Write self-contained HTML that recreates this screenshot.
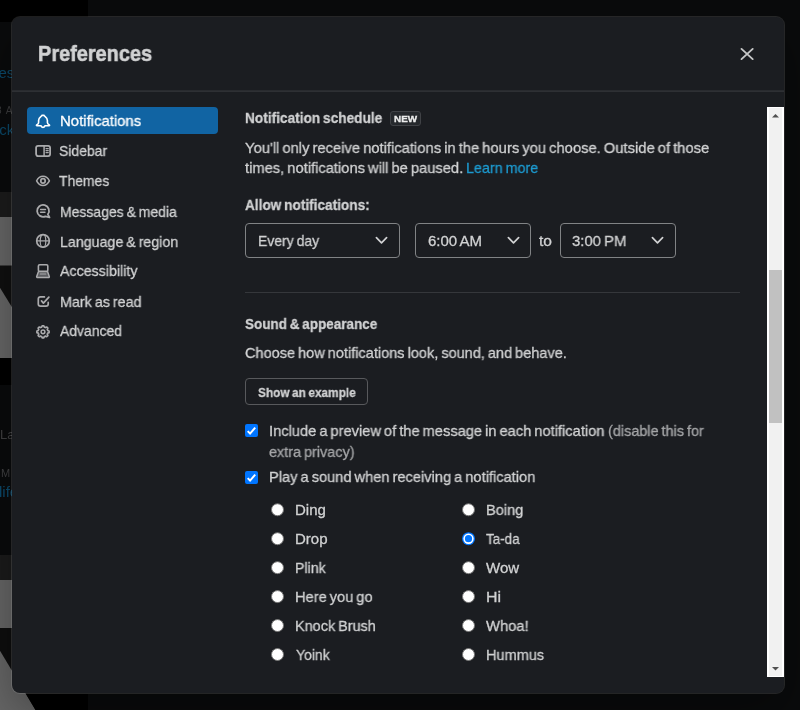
<!DOCTYPE html>
<html>
<head>
<meta charset="utf-8">
<title>Preferences</title>
<style>
*{box-sizing:border-box;margin:0;padding:0}
html,body{width:800px;height:710px;overflow:hidden;background:#0a0b0c;font-family:"Liberation Sans",sans-serif;}
body{position:relative;color:#d1d2d3;font-size:15px;line-height:22px}
.a{position:absolute}
#dlg{position:absolute;left:12px;top:17px;width:772px;height:676px;background:#1b1d21;border-radius:8px;box-shadow:0 0 0 1px rgba(232,232,232,.13),0 18px 48px rgba(0,0,0,.35)}
.t{position:absolute;white-space:nowrap;transform-origin:0 0;will-change:transform;-webkit-text-stroke:0.3px currentColor}
#title{-webkit-text-stroke:.6px currentColor}
.bgt{position:absolute;white-space:nowrap;left:0;will-change:transform}
.selbox{position:absolute;top:223px;height:35px;border:1px solid #818385;border-radius:4px}
.chev{position:absolute;top:236px;width:13px;height:9px}
.cb{position:absolute;left:245px;width:13px;height:13px;background:#0075ff;border-radius:2px}
.cb svg{position:absolute;left:0;top:0}
.rd{position:absolute;width:13px;height:13px;border-radius:50%;background:#fff;border:1px solid #767676}
.rd.on{border:2px solid #0075ff;background:#0075ff;box-shadow:inset 0 0 0 1.5px #fff}
.ic{position:absolute;left:34px;width:18px;height:18px;fill:none;stroke:#ababad;stroke-width:1.5;stroke-linecap:round;stroke-linejoin:round}
</style>
</head>
<body>
<!-- dimmed app background -->
<div class="a" style="left:0;top:0;width:88px;height:710px;background:#000"></div>
<div class="a" style="left:0;top:22px;width:88px;height:672px;background:#0a0b0c"></div>
<div class="a" style="left:0;top:192px;width:30px;height:25px;background:#1c1c1c"></div>
<div class="a" style="left:0;top:217px;width:30px;height:141px;background:#686868"></div>
<div class="a" style="left:0;top:358px;width:30px;height:27px;background:#010101"></div>
<div class="a" style="left:0;top:555px;width:30px;height:25px;background:#1b1b1b"></div>
<div class="a" style="left:0;top:580px;width:40px;height:130px;background:#676767"></div>
<svg class="a" style="left:0;top:0" width="60" height="710">
<polygon points="0,265.5 30,265.5 30,336.5 0,287.8" fill="#101010"/>
<polygon points="0,628 60,628 60,710 35.5,710 0,650.8" fill="#0e0e0e"/>
<polygon points="26,694 60,694 60,710 35.5,710" fill="#000"/>
</svg>
<div class="bgt" style="top:62px;left:-9px;font-size:15px;color:#0b4a6b">yes</div>
<div class="bgt" style="top:100px;left:-4px;font-size:10px;color:#3c3c3e;letter-spacing:1px">8 A</div>
<div class="bgt" style="top:119px;left:-9.5px;font-size:15px;color:#0b4a6b">ack</div>
<div class="bgt" style="top:424px;left:0px;font-size:13px;color:#414143">La</div>
<div class="bgt" style="top:461.5px;left:0.5px;font-size:11px;color:#414143">M</div>
<div class="bgt" style="top:481px;left:-1px;font-size:15px;color:#0c4c6e">life</div>

<div id="dlg"></div>
<div class="a" style="left:12px;top:90px;width:772px;height:1px;background:#292b2f"></div>
<div class="a" style="left:12px;top:91px;width:772px;height:1px;background:#2e3034"></div>

<!-- close X -->
<svg class="a" style="left:738px;top:45px" width="18" height="18" viewBox="0 0 18 18"><path d="M3.5 3.9 L14.7 14.1 M14.7 3.9 L3.5 14.1" stroke="#c6c7c8" stroke-width="1.9" stroke-linecap="round" fill="none"/></svg>

<!-- nav -->
<div class="a" style="left:27px;top:107px;width:191px;height:27px;border-radius:4px;background:#1164a3"></div>
<svg class="ic" style="top:112px" viewBox="0 0 18 18"><path d="M7.9 3.4 H10.1 C10.4 4.6 13.4 5.2 13.4 8.4 V10.4 C13.4 11.6 14.2 12.2 15.3 12.9 C15.8 13.3 15.6 13.7 15 13.7 H11 C10.8 14.9 10 15.4 9 15.4 C8 15.4 7.2 14.9 7 13.7 H3 C2.4 13.7 2.2 13.3 2.7 12.9 C3.8 12.2 4.6 11.6 4.6 10.4 V8.4 C4.6 5.2 7.6 4.6 7.9 3.4 Z" stroke="#fff" stroke-width="1.6"/></svg>
<svg class="ic" style="top:142px" viewBox="0 0 18 18"><rect x="2.1" y="3.8" width="14" height="10.3" rx="2" stroke-width="1.8"/><path d="M10.1 3.7 V14.3"/><path d="M12 6.6 H14.3 M12 8.6 H14.3 M12 10.6 H14.3" stroke-width="1.1"/></svg>
<svg class="ic" style="top:172px" viewBox="0 0 18 18"><path d="M2.6 8.9 C4.2 5.7 6.6 4.3 9 4.3 C11.4 4.3 13.8 5.7 15.4 8.9 C13.8 12.1 11.4 13.5 9 13.5 C6.6 13.5 4.2 12.1 2.6 8.9 Z"/><circle cx="9" cy="8.9" r="2.2" stroke-width="1.7"/></svg>
<svg class="ic" style="top:202px" viewBox="0 0 18 18"><path d="M13.9 12.3 A5.95 5.95 0 1 0 11.4 14.3 L15.5 15.4 Z" stroke-width="1.8"/><path d="M6.6 7.45 H11.5 M6.6 10.3 H11" stroke-width="1.4"/></svg>
<svg class="ic" style="top:232px" viewBox="0 0 18 18"><circle cx="9" cy="8.9" r="6.3" stroke-width="1.7"/><ellipse cx="9" cy="8.9" rx="2.8" ry="6.4" stroke-width="1.2"/><path d="M2.6 8.9 H15.4" stroke-width="1.3"/></svg>
<svg class="ic" style="top:262px" viewBox="0 0 18 18"><rect x="4.4" y="2.8" width="9.4" height="6.6" rx="1.2" stroke-width="1.6"/><path d="M4.4 9.8 L2.7 14.4 Q2.5 15.5 3.6 15.5 H14.4 Q15.5 15.5 15.3 14.4 L13.6 9.8" fill="rgba(171,171,173,.45)"/><path d="M6.2 12 H11.8" stroke-width="1.1"/></svg>
<svg class="ic" style="top:292px" viewBox="0 0 18 18"><path d="M10.4 4.9 H6.5 Q4.3 4.9 4.3 7.1 V11.9 Q4.3 14.1 6.5 14.1 H12 Q14.2 14.1 14.2 11.9 V10.4" stroke-width="1.7"/><path d="M7.5 8.9 L9.4 11.1 L14.9 5.2" stroke-width="1.7"/></svg>
<svg class="ic" style="top:322px" viewBox="0 0 18 18"><path d="M9.00 3.75 L9.40 3.76 L9.80 3.80 L10.07 4.46 L10.27 5.12 L10.58 5.21 L10.88 5.32 L11.17 5.46 L11.45 5.61 L12.06 5.28 L12.71 5.01 L13.02 5.26 L13.31 5.54 L13.59 5.83 L13.84 6.14 L13.57 6.79 L13.24 7.40 L13.39 7.68 L13.53 7.97 L13.64 8.27 L13.73 8.58 L14.39 8.78 L15.05 9.05 L15.09 9.45 L15.10 9.85 L15.09 10.25 L15.05 10.65 L14.39 10.92 L13.73 11.12 L13.64 11.43 L13.53 11.73 L13.39 12.02 L13.24 12.30 L13.57 12.91 L13.84 13.56 L13.59 13.87 L13.31 14.16 L13.02 14.44 L12.71 14.69 L12.06 14.42 L11.45 14.09 L11.17 14.24 L10.88 14.38 L10.58 14.49 L10.27 14.58 L10.07 15.24 L9.80 15.90 L9.40 15.94 L9.00 15.95 L8.60 15.94 L8.20 15.90 L7.93 15.24 L7.73 14.58 L7.42 14.49 L7.12 14.38 L6.83 14.24 L6.55 14.09 L5.94 14.42 L5.29 14.69 L4.98 14.44 L4.69 14.16 L4.41 13.87 L4.16 13.56 L4.43 12.91 L4.76 12.30 L4.61 12.02 L4.47 11.73 L4.36 11.43 L4.27 11.12 L3.61 10.92 L2.95 10.65 L2.91 10.25 L2.90 9.85 L2.91 9.45 L2.95 9.05 L3.61 8.78 L4.27 8.58 L4.36 8.27 L4.47 7.97 L4.61 7.68 L4.76 7.40 L4.43 6.79 L4.16 6.14 L4.41 5.83 L4.69 5.54 L4.98 5.26 L5.29 5.01 L5.94 5.28 L6.55 5.61 L6.83 5.46 L7.12 5.32 L7.42 5.21 L7.73 5.12 L7.93 4.46 L8.20 3.80 L8.60 3.76 Z" stroke-width="1.7"/><circle cx="9.0" cy="9.8" r="1.9" stroke-width="1.5"/></svg>

<!-- badge -->
<div class="a" style="left:390px;top:111px;width:31px;height:15px;border-radius:3px;background:#25282c;border:1px solid #404246"></div>

<!-- selects -->
<div class="selbox" style="left:245px;width:155px"></div>
<div class="selbox" style="left:415px;width:116px"></div>
<div class="selbox" style="left:560px;width:116px"></div>
<svg class="chev" style="left:375px" viewBox="0 0 13 9"><path d="M1.4 1.7 L6.5 6.8 L11.6 1.7" stroke="#d1d2d3" stroke-width="1.7" fill="none" stroke-linecap="round" stroke-linejoin="round"/></svg>
<svg class="chev" style="left:506.5px" viewBox="0 0 13 9"><path d="M1.4 1.7 L6.5 6.8 L11.6 1.7" stroke="#d1d2d3" stroke-width="1.7" fill="none" stroke-linecap="round" stroke-linejoin="round"/></svg>
<svg class="chev" style="left:651px" viewBox="0 0 13 9"><path d="M1.4 1.7 L6.5 6.8 L11.6 1.7" stroke="#d1d2d3" stroke-width="1.7" fill="none" stroke-linecap="round" stroke-linejoin="round"/></svg>

<!-- hr -->
<div class="a" style="left:245px;top:292px;width:495px;height:1px;background:#35373b"></div>

<!-- button -->
<div class="a" style="left:245px;top:378px;width:123px;height:27px;border:1px solid #58595c;border-radius:4px"></div>

<!-- checkboxes -->
<div class="cb" style="top:424px"><svg width="13" height="13" viewBox="0 0 13 13"><path d="M2.7 7.1 L5.1 9.6 L10.2 3.7" stroke="#fff" stroke-width="2" fill="none"/></svg></div>
<div class="cb" style="top:471px"><svg width="13" height="13" viewBox="0 0 13 13"><path d="M2.7 7.1 L5.1 9.6 L10.2 3.7" stroke="#fff" stroke-width="2" fill="none"/></svg></div>

<svg class="a" style="left:0;top:0" width="800" height="710">
<circle cx="277.5" cy="509.75" r="6" fill="#fff" stroke="#767676" stroke-width="1"/>
<circle cx="468.5" cy="509.75" r="6" fill="#fff" stroke="#767676" stroke-width="1"/>
<circle cx="277.5" cy="538.70" r="6" fill="#fff" stroke="#767676" stroke-width="1"/>
<circle cx="468.5" cy="538.70" r="6.5" fill="#0075ff"/><circle cx="468.5" cy="538.70" r="5.2" fill="#fff"/><circle cx="468.5" cy="538.70" r="3.6" fill="#0075ff"/>
<circle cx="277.5" cy="567.65" r="6" fill="#fff" stroke="#767676" stroke-width="1"/>
<circle cx="468.5" cy="567.65" r="6" fill="#fff" stroke="#767676" stroke-width="1"/>
<circle cx="277.5" cy="596.60" r="6" fill="#fff" stroke="#767676" stroke-width="1"/>
<circle cx="468.5" cy="596.60" r="6" fill="#fff" stroke="#767676" stroke-width="1"/>
<circle cx="277.5" cy="625.55" r="6" fill="#fff" stroke="#767676" stroke-width="1"/>
<circle cx="468.5" cy="625.55" r="6" fill="#fff" stroke="#767676" stroke-width="1"/>
<circle cx="277.5" cy="654.50" r="6" fill="#fff" stroke="#767676" stroke-width="1"/>
<circle cx="468.5" cy="654.50" r="6" fill="#fff" stroke="#767676" stroke-width="1"/>
</svg>

<!-- scrollbar -->
<div class="a" style="left:767px;top:107px;width:17px;height:570px;background:#fff"></div>
<div class="a" style="left:769px;top:108px;width:13px;height:568px;background:#f1f1f1"></div>
<div class="a" style="left:769px;top:270px;width:13px;height:153px;background:#c1c1c1"></div>
<svg class="a" style="left:767px;top:107px" width="17" height="17" viewBox="0 0 17 17"><path d="M5 10.5 L8.5 7 L12 10.5 Z" fill="#505050"/></svg>
<svg class="a" style="left:767px;top:660px" width="17" height="17" viewBox="0 0 17 17"><path d="M5 7 L8.5 10.5 L12 7 Z" fill="#505050"/></svg>

<div class="t" id="title" style="left:38.09px;top:38.38px;font-size:22px;line-height:32px;font-weight:bold;color:#d1d2d3;transform:scaleX(0.9059)">Preferences</div>
<div class="t" id="n0" style="left:59.51px;top:110.20px;font-size:15px;line-height:22px;color:#ffffff;transform:scaleX(0.9937)">Notifications</div>
<div class="t" id="n1" style="left:58.90px;top:139.80px;font-size:15px;line-height:22px;color:#d1d2d3;transform:scaleX(0.9302)">Sidebar</div>
<div class="t" id="n2" style="left:59.30px;top:169.80px;font-size:15px;line-height:22px;color:#d1d2d3;transform:scaleX(0.9276)">Themes</div>
<div class="t" id="n3" style="left:60.07px;top:200.50px;font-size:15px;line-height:22px;word-spacing:-1.10px;color:#d1d2d3;transform:scaleX(0.9319)">Messages &amp; media</div>
<div class="t" id="n4" style="left:59.55px;top:230.50px;font-size:15px;line-height:22px;word-spacing:-1.10px;color:#d1d2d3;transform:scaleX(0.9486)">Language &amp; region</div>
<div class="t" id="n5" style="left:59.60px;top:260.45px;font-size:15px;line-height:22px;color:#d1d2d3;transform:scaleX(0.9478)">Accessibility</div>
<div class="t" id="n6" style="left:60.04px;top:290.65px;font-size:15px;line-height:22px;word-spacing:-1.10px;color:#d1d2d3;transform:scaleX(0.9555)">Mark as read</div>
<div class="t" id="n7" style="left:59.90px;top:320.45px;font-size:15px;line-height:22px;color:#d1d2d3;transform:scaleX(0.9296)">Advanced</div>
<div class="t" id="h1" style="left:245.29px;top:107.20px;font-size:15px;line-height:22px;font-weight:bold;word-spacing:-1.10px;color:#d1d2d3;transform:scaleX(0.9113)">Notification schedule</div>
<div class="t" id="new" style="left:394.00px;top:112.58px;font-size:9px;line-height:13px;font-weight:bold;color:#ececec;transform:scaleX(1.0975)">NEW</div>
<div class="t" id="p1" style="left:245.40px;top:136.80px;font-size:15px;line-height:22px;word-spacing:-1.10px;color:#d1d2d3;transform:scaleX(0.9849)">You'll only receive notifications in the hours you choose. Outside of those</div>
<div class="t" id="p2" style="left:245.40px;top:157.20px;font-size:15px;line-height:22px;word-spacing:-1.10px;color:#d1d2d3;transform:scaleX(0.9814)">times, notifications will be paused.</div>
<div class="t" id="lm" style="left:466.15px;top:157.20px;font-size:15px;line-height:22px;word-spacing:-1.10px;color:#1d9bd1;transform:scaleX(0.9547)">Learn more</div>
<div class="t" id="h2" style="left:245.40px;top:193.60px;font-size:15px;line-height:22px;font-weight:bold;word-spacing:-1.10px;color:#d1d2d3;transform:scaleX(0.9088)">Allow notifications:</div>
<div class="t" id="s1" style="left:257.57px;top:229.80px;font-size:15px;line-height:22px;word-spacing:-1.10px;color:#d1d2d3;transform:scaleX(0.9325)">Every day</div>
<div class="t" id="s2" style="left:427.75px;top:229.80px;font-size:15px;line-height:22px;word-spacing:-1.10px;color:#d1d2d3;transform:scaleX(0.9997)">6:00 AM</div>
<div class="t" id="to" style="left:538.70px;top:229.80px;font-size:15px;line-height:22px;color:#d1d2d3;transform:scaleX(1.0355)">to</div>
<div class="t" id="s3" style="left:572.30px;top:229.80px;font-size:15px;line-height:22px;word-spacing:-1.10px;color:#d1d2d3;transform:scaleX(0.9932)">3:00 PM</div>
<div class="t" id="h3" style="left:245.40px;top:312.55px;font-size:15px;line-height:22px;font-weight:bold;word-spacing:-1.10px;color:#d1d2d3;transform:scaleX(0.8994)">Sound &amp; appearance</div>
<div class="t" id="p3" style="left:245.40px;top:341.80px;font-size:15px;line-height:22px;word-spacing:-1.10px;color:#d1d2d3;transform:scaleX(0.9695)">Choose how notifications look, sound, and behave.</div>
<div class="t" id="btn" style="left:257.70px;top:382.50px;font-size:13px;line-height:19px;font-weight:bold;word-spacing:-0.95px;color:#d1d2d3;transform:scaleX(0.9121)">Show an example</div>
<div class="t" id="c1" style="left:269.02px;top:419.90px;font-size:15px;line-height:22px;word-spacing:-1.10px;color:#d1d2d3;transform:scaleX(0.9777)">Include a preview of the message in each notification</div>
<div class="t" id="c1b" style="left:608.40px;top:419.90px;font-size:15px;line-height:22px;word-spacing:-1.10px;color:#a5a6a8;transform:scaleX(0.9627)">(disable this for</div>
<div class="t" id="c1c" style="left:269.10px;top:441.20px;font-size:15px;line-height:22px;word-spacing:-1.10px;color:#a5a6a8;transform:scaleX(0.9615)">extra privacy)</div>
<div class="t" id="c2" style="left:269.02px;top:466.30px;font-size:15px;line-height:22px;word-spacing:-1.10px;color:#d1d2d3;transform:scaleX(0.9764)">Play a sound when receiving a notification</div>
<div class="t" id="l0" style="left:294.80px;top:498.65px;font-size:15px;line-height:22px;color:#d1d2d3;transform:scaleX(0.9998)">Ding</div>
<div class="t" id="l1" style="left:294.80px;top:527.71px;font-size:15px;line-height:22px;color:#d1d2d3;transform:scaleX(1.0010)">Drop</div>
<div class="t" id="l2" style="left:294.86px;top:556.77px;font-size:15px;line-height:22px;color:#d1d2d3;transform:scaleX(0.9434)">Plink</div>
<div class="t" id="l3" style="left:294.82px;top:585.83px;font-size:15px;line-height:22px;word-spacing:-1.10px;color:#d1d2d3;transform:scaleX(0.9760)">Here you go</div>
<div class="t" id="l4" style="left:294.84px;top:614.89px;font-size:15px;line-height:22px;word-spacing:-1.10px;color:#d1d2d3;transform:scaleX(0.9637)">Knock Brush</div>
<div class="t" id="l5" style="left:295.80px;top:643.95px;font-size:15px;line-height:22px;color:#d1d2d3;transform:scaleX(0.9305)">Yoink</div>
<div class="t" id="r0" style="left:485.73px;top:498.65px;font-size:15px;line-height:22px;color:#d1d2d3;transform:scaleX(0.9724)">Boing</div>
<div class="t" id="r1" style="left:485.80px;top:527.71px;font-size:15px;line-height:22px;color:#d1d2d3;transform:scaleX(0.8958)">Ta-da</div>
<div class="t" id="r2" style="left:486.00px;top:556.77px;font-size:15px;line-height:22px;color:#d1d2d3;transform:scaleX(1.0021)">Wow</div>
<div class="t" id="r3" style="left:485.64px;top:585.83px;font-size:15px;line-height:22px;color:#d1d2d3;transform:scaleX(1.0598)">Hi</div>
<div class="t" id="r4" style="left:486.20px;top:614.89px;font-size:15px;line-height:22px;color:#d1d2d3;transform:scaleX(0.9861)">Whoa!</div>
<div class="t" id="r5" style="left:485.73px;top:643.95px;font-size:15px;line-height:22px;color:#d1d2d3;transform:scaleX(0.9674)">Hummus</div>
</body>
</html>
